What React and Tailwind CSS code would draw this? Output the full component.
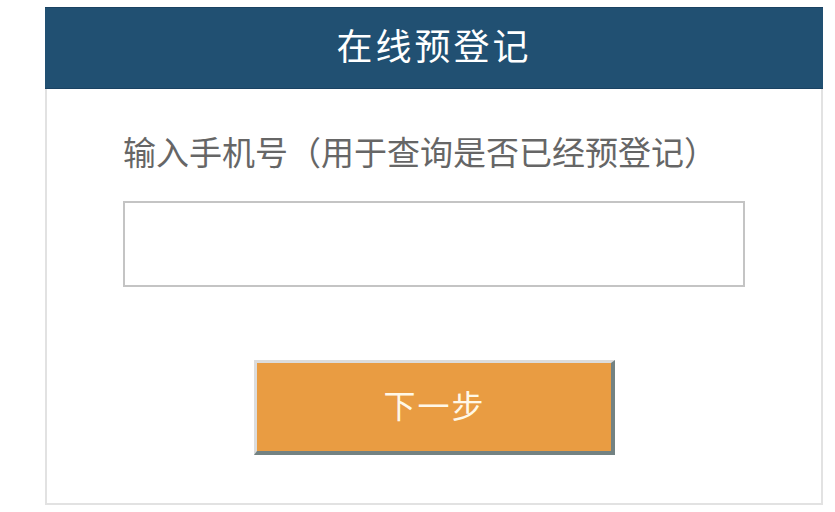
export default function App() {
  return (
    <div
      className="min-h-[512px] bg-white pl-[45px] pt-[7px]"
      style={{ fontFamily: '"Noto Sans CJK SC", "Noto Sans", sans-serif' }}
    >
      <div className="flex h-[498px] w-[778px] flex-col border-x-2 border-b-2 border-[#e2e2e2]">
        <div className="-mx-[2px] flex h-[82px] items-center justify-center border-y border-[#1a4262] bg-[#215072] pb-[8px]">
          <h1 className="text-[36px] leading-[44px] tracking-[3px] text-white">在线预登记</h1>
        </div>
        <div className="flex flex-col px-[76px]">
          <label className="mt-[42px] block text-[33px] leading-[40px] text-[#666666]">
            输入手机号（用于查询是否已经预登记）
          </label>
          <input
            type="text"
            className="mt-[30px] h-[86px] w-full border-2 border-[#c4c4c4] bg-white outline-none"
          />
          <div className="mt-[73px] flex justify-center">
            <button
              type="button"
              className="h-[95px] w-[361px] border-t-[3px] border-l-[3px] border-r-[4px] border-b-[4px] border-t-[#dcdcdc] border-l-[#dcdcdc] border-r-[#738282] border-b-[#738282] bg-[#e99c42] pb-[6px] pl-[2px] text-[32px] tracking-[2px] text-[#fff8e8]"
            >
              下一步
            </button>
          </div>
        </div>
      </div>
    </div>
  );
}
